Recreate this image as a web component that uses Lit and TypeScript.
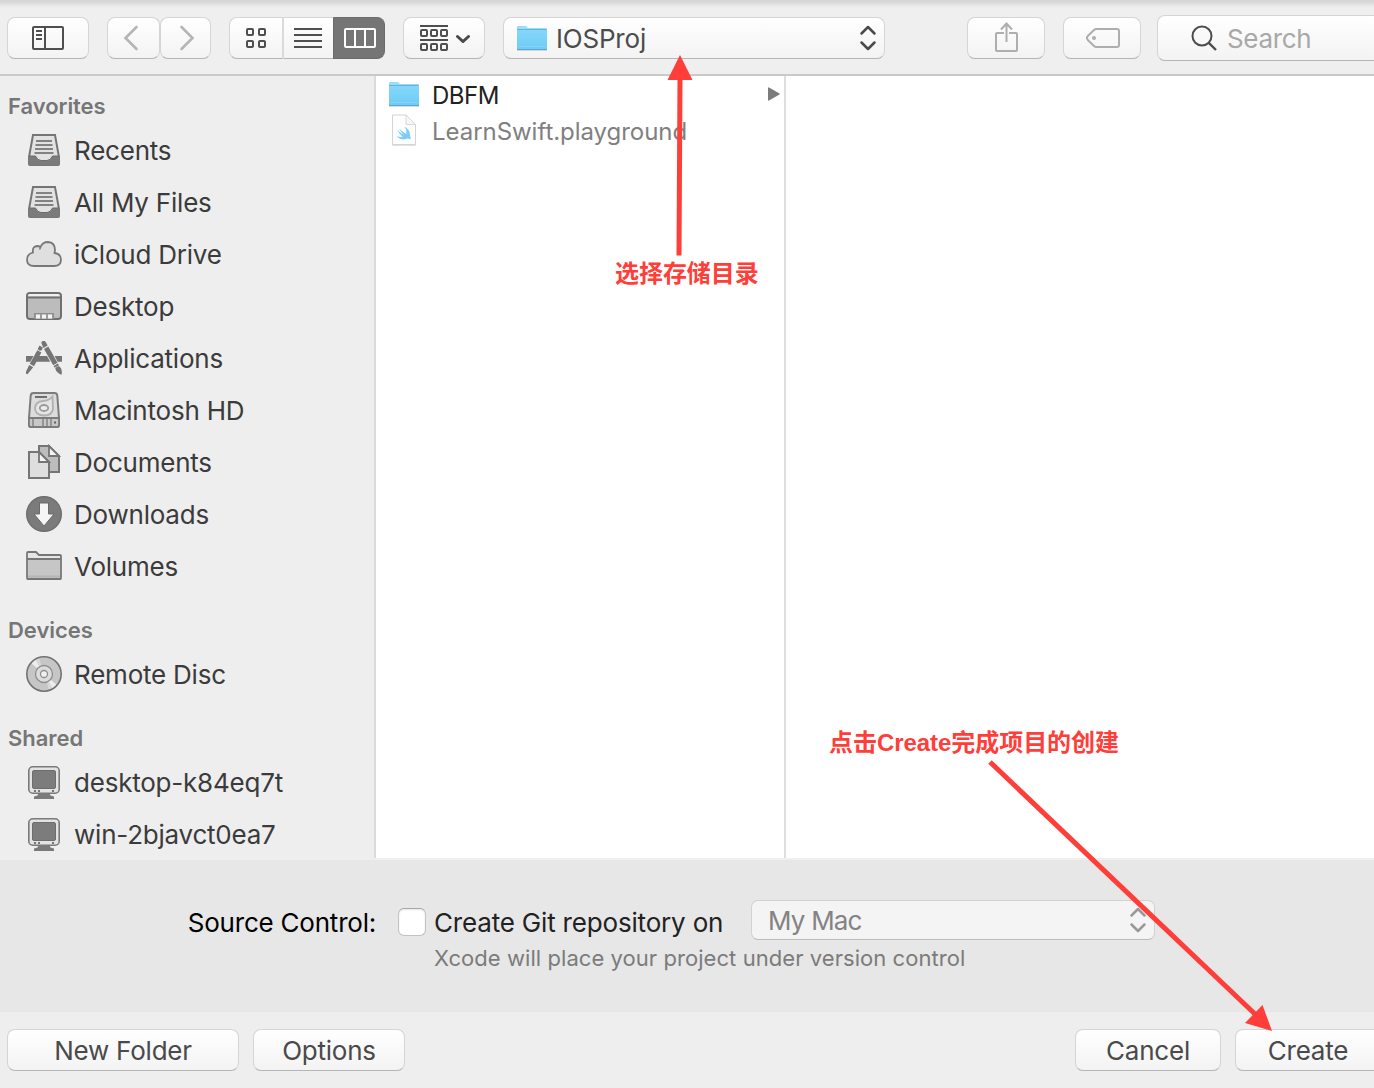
import { LitElement, html, svg, css, nothing, TemplateResult } from "lit";
import { customElement, property } from "lit/decorators.js";

type IconName =
  | "tray" | "cloud" | "desktop" | "apps" | "drive" | "docs"
  | "download" | "folder" | "disc" | "monitor";

const sidebarIcons: Record<IconName, TemplateResult> = {
  tray: svg`
    <path d="M7 3H29L33 25V32Q33 33 32 33H4Q3 33 3 32V25Z" fill="#e2e2e2" stroke="#757575" stroke-width="2"/>
    <path d="M2.500 24H9.500Q11.500 28.500 15 28.500H21Q24.500 28.500 26.500 24H33.500V31L32 33.500H4L2.500 31Z" fill="#7b7b7b"/>
    <path d="M3 24H9.500Q11.500 28.500 15 28.500H21Q24.500 28.500 26.500 24H33" fill="none" stroke="#6c6c6c" stroke-width="1"/>
    <path d="M10 9H26M9.500 13H26.500M9 17H27M8.500 21H27.500" stroke="#828282" stroke-width="2"/>`,
  cloud: svg`
    <path d="M8 30Q1 30 1 23.500Q1 18 7 16.500Q6 10.500 11 10Q13 10 14.500 11Q16.500 6 22 6Q29 6.500 29 14L28.500 17Q35 18 35 23.500Q35 30 28 30Z" fill="#dfdfdf" stroke="#787878" stroke-width="1.800"/>
    <path d="M14.500 11Q13.800 12.500 14 13.500" fill="none" stroke="#787878" stroke-width="1.600"/>`,
  desktop: svg`
    <rect x="1" y="5" width="34" height="26" rx="3" fill="#bcbcbc" stroke="#707070" stroke-width="2"/>
    <path d="M2 8.500V7.500Q2 6 4 6H32Q34 6 34 8.500Z" fill="#f0f0f0"/>
    <path d="M1 9.500H35" stroke="#707070" stroke-width="2"/>
    <path d="M8.500 31V25.500H27.500V31" fill="#9a9a9a" stroke="#8c8c8c"/>
    <path d="M10 26.500h4v4h-4zM16 26.500h4v4h-4zM22 26.500h4v4h-4z" fill="#f4f4f4"/>`,
  apps: svg`
    <path d="M0 16H7.500L4.300 21.700H0ZM12.800 16H21L24.200 21.700H9.500ZM28.600 16H36V21.700H31.600Z" fill="#757575"/>
    <path d="M13.500 5.500L16.800 7.400L15.800 10.300L13.800 10.700L11.600 9.200Z" fill="#757575"/>
    <path d="M11.300 10.300L15.400 12.600L8 26.200L3.800 23.800Z" fill="#757575"/>
    <path d="M3.200 24.900L7.200 27.200L1.500 34.300L0 33.800V31.500Z" fill="#757575"/>
    <path d="M15.200 2.800L16.500 1H18.800L20 2.600L21.700 5.600L17.400 8Z" fill="#757575"/>
    <path d="M18 9L22.300 6.600L31.500 22.800L27.200 25.200Z" fill="#757575"/>
    <path d="M27.700 26L32 23.600L33 25.300L28.700 27.700Z" fill="#757575"/>
    <path d="M29.200 28.600Q31 25.800 33.600 26.400Q36.800 29.500 35.500 34.800Q30.500 33.200 29.200 28.600Z" fill="#757575"/>`,
  drive: svg`
    <path d="M7.500 1H28.500Q31 1 31.300 3.500L33 26V33Q33 35 31 35H5Q3 35 3 33V26L4.700 3.500Q5 1 7.500 1Z" fill="#dcdcdc" stroke="#7c7c7c" stroke-width="2"/>
    <path d="M3 26H33V33Q33 35 31 35H5Q3 35 3 33Z" fill="#c8c8c8" stroke="#7c7c7c" stroke-width="1.800"/>
    <path d="M9 5H21" stroke="#6e6e6e" stroke-width="2"/>
    <path d="M26.500 4.500L27 17Q26 23.500 18 23.500Q9 23 9 16Q9.500 9.500 17 9Q23 8.800 26.500 4.500Z" fill="#e4e4e4" stroke="#b0b0b0" stroke-width="1.800"/>
    <ellipse cx="18" cy="16" rx="4.200" ry="3" fill="#ececec" stroke="#9a9a9a" stroke-width="1.800"/>
    <path d="M7 27V34M17 27V34M21 27V34M25 27V34" stroke="#909090" stroke-width="1.800"/>
    <path d="M28 30.500H30" stroke="#606060" stroke-width="2"/>`,
  docs: svg`
    <path d="M13 2H23L33 12V28H13Z" fill="#bdbdbd" stroke="#757575" stroke-width="2"/>
    <path d="M23 2V12H33Z" fill="#f4f4f4" stroke="#757575" stroke-width="1.800"/>
    <path d="M3 8H13L23 18V34H3Z" fill="#dedede" stroke="#757575" stroke-width="2"/>
    <path d="M13 8V18H23Z" fill="#f4f4f4" stroke="#757575" stroke-width="1.800"/>`,
  download: svg`
    <circle cx="18" cy="18" r="17.300" fill="#7b7b7b" stroke="#6d6d6d" stroke-width="1.400"/>
    <path d="M13.500 7H22.500V18H28L18 30L8 18H13.500Z" fill="#f6f6f6" stroke="#6a6a6a" stroke-width="1"/>`,
  folder: svg`
    <path d="M1 30V5Q1 4 2 4H10L13 7H34Q35 7 35 8V30Q35 31 34 31H2Q1 31 1 30Z" fill="#e6e6e6" stroke="#777" stroke-width="1.800"/>
    <path d="M2 12H34V30H2Z" fill="#c6c6c6"/>
    <path d="M1 11H35" stroke="#777" stroke-width="1.800"/>
    <path d="M2 28.500H34" stroke="#b4b4b4" stroke-width="2"/>
    <path d="M1 31H35" stroke="#777" stroke-width="1.800"/>`,
  disc: svg`
    <circle cx="18" cy="18" r="17" fill="#c6c6c6"/>
    <path d="M18 18L5 7L9.500 3.500ZM18 18L31 29L26.500 32.500Z" fill="#ededed"/>
    <path d="M18 18L9.500 3.500L13 2ZM18 18L26.500 32.500L23 34Z" fill="#d8d8d8"/>
    <circle cx="18" cy="18" r="17.200" fill="none" stroke="#727272" stroke-width="1.600"/>
    <circle cx="18" cy="18" r="8.500" fill="#dcdcdc" stroke="#8f8f8f" stroke-width="1.300"/>
    <circle cx="18" cy="18" r="3.500" fill="#f0f0f0" stroke="#8f8f8f" stroke-width="1.300"/>`,
  monitor: svg`
    <path d="M12.500 29H23.500L24.500 31.500L28 32.500V35H8V32.500L11.500 31.500Z" fill="#7a7a7a"/>
    <rect x="2.800" y="2.800" width="30.400" height="26.400" rx="4" fill="#e3e3e3" stroke="#7a7a7a" stroke-width="1.600"/>
    <rect x="6.500" y="6.500" width="23" height="18" rx="1.500" fill="#7c7c7c" stroke="#6d6d6d" stroke-width="1"/>
    <path d="M8 27h2M12 27h2M26 27h2" stroke="#757575" stroke-width="2"/>`,
};

const blueFolder = html`
  <svg class="blue-folder" width="32" height="28" viewBox="0 0 32 28">
    <defs>
      <linearGradient id="front" x1="0" y1="0" x2="0" y2="1">
        <stop offset="0" stop-color="#86d6f9"/><stop offset="1" stop-color="#6bcbf6"/>
      </linearGradient>
    </defs>
    <path d="M1 25V3Q1 2 2 2H10L12 4H30Q31 4 31 5V25Z" fill="#9bdcf8"/>
    <path d="M1 7V5H30.500V7Z" fill="#62b4dc"/>
    <path d="M1 6H31V25Q31 26 30 26H2Q1 26 1 25Z" fill="url(#front)"/>
    <path d="M1 25.500H31" stroke="#57a9d3" stroke-width="1"/>
    <path d="M2 22.500H30" stroke="#8ad6f8" stroke-width=".8"/>
    <path d="M1 26.500H31" stroke="#00000022" stroke-width="1"/>
  </svg>`;

const playgroundFile = html`
  <svg class="file-icon" width="32" height="34" viewBox="0 0 32 34">
    <path d="M4.500 1H18L27.500 10.500V30.500H4.500Z" fill="#fefefe" stroke="#d4d4d4"/>
    <path d="M18 1V10.500H27.500Z" fill="#f7f7f7" stroke="#d9d9d9"/>
    <path d="M4 31.500H28" stroke="#0000001c"/>
    <path transform="translate(0 -2.500)" d="M9 18Q13 22 16 23.500Q12.500 20 11 17Q15 21 18.500 22.500Q19 18.500 16.500 15Q22.500 18.500 22 24.500Q23.500 27 22.500 28Q20 26.500 18 27.500Q12.500 29 8.500 24.500Q12 26 14.500 25.300Q11 22 9 18Z" fill="#79cdf7"/>
  </svg>`;

@customElement("side-item")
export class SideItem extends LitElement {
  @property() icon: IconName = "folder";
  @property() label = "";

  static styles = css`
    :host { display: flex; align-items: center; height: 52px; padding-left: 26px; }
    .icon { flex: none; width: 36px; height: 36px; margin-bottom: 2px; }
    .label { margin-left: 12px; white-space: nowrap; }
  `;

  render() {
    return html`
      <svg class="icon" viewBox="0 0 36 36">${sidebarIcons[this.icon]}</svg>
      <span class="label">${this.label}</span>`;
  }
}

const sections: { title: string; items: [IconName, string][] }[] = [
  {
    title: "Favorites",
    items: [
      ["tray", "Recents"], ["tray", "All My Files"], ["cloud", "iCloud Drive"],
      ["desktop", "Desktop"], ["apps", "Applications"], ["drive", "Macintosh HD"],
      ["docs", "Documents"], ["download", "Downloads"], ["folder", "Volumes"],
    ],
  },
  { title: "Devices", items: [["disc", "Remote Disc"]] },
  { title: "Shared", items: [["monitor", "desktop-k84eq7t"], ["monitor", "win-2bjavct0ea7"]] },
];

const files = [
  { name: "DBFM", icon: blueFolder, folder: true },
  { name: "LearnSwift.playground", icon: playgroundFile, folder: false },
];

@customElement("app-root")
export class AppRoot extends LitElement {
  static styles = css`
    :host {
      display: block; position: relative; width: 1374px; height: 1088px; overflow: hidden;
      background: #efefef; color: #3b3b3b;
      font: 430 26px/1 Inter, "Liberation Sans", sans-serif;
      letter-spacing: -0.22px;
    }
    * { box-sizing: border-box; }
    svg { display: block; flex: none; }
    .dialog { display: flex; flex-direction: column; height: 1088px; }

    .toolbar {
      display: flex; align-items: center; height: 76px; padding: 2px 0 0 7px;
      border-bottom: 2px solid #c9c9c9; flex: none;
      background: linear-gradient(#d5d5d5 0, #dadada 3px, #e6e6e6 5px, #efefef 8px);
    }
    .btn {
      display: flex; align-items: center; justify-content: center; flex: none; height: 42px;
      border: 1px solid #d5d5d5; border-bottom-color: #b5b5b5; border-radius: 8px;
      background: linear-gradient(#ffffff, #f3f3f3); white-space: nowrap;
    }
    .w82 { width: 82px; }
    .w78 { width: 78px; }
    .nav { display: flex; margin-left: 18px; }
    .back { width: 53px; padding-right: 5px; }
    .fwd { width: 51px; padding-left: 2px; }
    .views { display: flex; margin-left: 18px; }
    .view-grid { width: 55px; padding-right: 1px; border-radius: 8px 0 0 8px; border-right: 2px solid #dadada; }
    .view-list { width: 49px; padding-right: 1px; border-radius: 0; border-left: 0; border-right: 0; }
    .view-columns { width: 52px; padding-left: 2px; border-radius: 0 8px 8px 0; background: #757575; border-color: #6a6a6a; border-top-color: #6d6d6d; }
    .arrange { margin-left: 18px; gap: 7px; padding-left: 2px; }
    .location { width: 382px; margin-left: 18px; justify-content: flex-start; padding: 0 7px 0 12px; color: #4c4c4c; }
    .location-name { flex: 1; margin-left: 8px; padding-top: 2px; letter-spacing: -0.2px; }
    .share { margin-left: 82px; padding-left: 2px; }
    .tag { margin-left: 18px; padding-left: 2px; }
    .search {
      width: 240px; height: 46px; margin-left: 16px; justify-content: flex-start;
      padding-left: 33px; gap: 10px; color: #a8a8a8; letter-spacing: -0.32px;
    }
    .search-text { padding-top: 2px; }

    .browser { display: flex; height: 784px; flex: none; }
    .sidebar { width: 376px; padding-top: 11px; border-right: 2px solid #dadada; flex: none; height: 782px; background: #eeeeee; }
    .heading {
      display: flex; align-items: center; height: 38px; padding-left: 8px;
      font-size: 22px; font-weight: 600; color: #767676; letter-spacing: -0.05px;
    }
    .section + .section { margin-top: 18px; }
    .column { height: 782px; background: #fff; }
    .files { width: 410px; padding-top: 1px; border-right: 2px solid #dedede; flex: none; }
    .preview { flex: 1; }
    .file { display: flex; align-items: center; height: 36px; padding: 0 4px 0 12px; font-size: 24px; color: #222; letter-spacing: -0.5px; }
    .file.dim { color: #808080; letter-spacing: -0.04px; }
    .file-name { flex: 1; margin-left: 12px; padding-top: 2px; white-space: nowrap; }
    .blue-folder { margin-bottom: 2px; }
    .location .blue-folder { margin-bottom: 0; }
    .disclosure { margin-bottom: 2px; }

    .accessory { height: 152px; padding-top: 40px; background: #e7e7e7; flex: none; }
    .scm { display: flex; align-items: center; height: 40px; white-space: nowrap; color: #222; }
    .scm-label { width: 376px; padding-top: 5px; text-align: right; color: #000; }
    .checkbox {
      width: 28px; height: 28px; margin: 4px 0 0 22px; border: 1px solid #c2c2c2; border-top-color: #a6a6a6;
      border-radius: 6px; background: #fff; box-shadow: inset 0 1px 2px #0000001a; flex: none;
    }
    .scm-text { width: 317px; padding-top: 5px; margin-left: 8px; letter-spacing: -0.18px; }
    .popup {
      display: flex; align-items: center; justify-content: space-between; width: 404px; height: 40px;
      padding: 1px 7px 0 16px; border: 1px solid #d2d2d2; border-bottom-color: #bcbcbc; border-radius: 7px;
      background: #f4f4f4; color: #838383; letter-spacing: -0.8px;
    }
    .popup svg { margin-bottom: 2px; }
    .hint { margin: 7px 0 0 434px; font-size: 22px; line-height: 22px; color: #7b7b7b; letter-spacing: 0.06px; white-space: nowrap; }

    .footer { display: flex; align-items: flex-start; height: 76px; padding: 17px 0 0 7px; background: #eeeeee; color: #4a4a4a; }
    .footer .btn { padding-top: 1px; }
    .new-folder { width: 232px; }
    .options { width: 152px; margin-left: 14px; }
    .cancel { width: 146px; margin-left: 670px; }
    .create { width: 146px; margin-left: 14px; }

    .marks { position: absolute; left: 0; top: 0; pointer-events: none; }
    .note {
      position: absolute; color: #ff3e39; white-space: nowrap; letter-spacing: -0.05px;
      font: 700 24px/28px "Liberation Sans", "Noto Sans CJK SC", sans-serif;
    }
    .note-dir { left: 615px; top: 260px; }
    .note-create { left: 829px; top: 729px; }
  `;

  private steppers(color: string) {
    return html`<svg width="18" height="28" viewBox="0 0 18 28" fill="none" stroke=${color}
      stroke-width="2.500" stroke-linecap="round" stroke-linejoin="round">
      <path d="M2.500 9.500L9 3L15.500 9.500M2.500 18.500L9 25L15.500 18.500"/></svg>`;
  }

  private toolbar() {
    return html`
      <div class="toolbar">
        <div class="btn w82">
          <svg width="32" height="24" viewBox="0 0 32 24" fill="none" stroke="#4f4f4f" stroke-width="2">
            <rect x="1" y="1" width="30" height="22" rx="1"/><path d="M13 1V23M4 5H10M4 9H10M4 13H10"/>
          </svg>
        </div>
        <div class="nav">
          <div class="btn back"><svg width="16" height="26" viewBox="0 0 16 26" fill="none" stroke="#b5b5b5" stroke-width="2.600" stroke-linecap="round"><path d="M13.500 2L2.500 13L13.500 24"/></svg></div>
          <div class="btn fwd"><svg width="16" height="26" viewBox="0 0 16 26" fill="none" stroke="#b5b5b5" stroke-width="2.600" stroke-linecap="round"><path d="M2.500 2L13.500 13L2.500 24"/></svg></div>
        </div>
        <div class="views">
          <div class="btn view-grid">
            <svg width="20" height="20" viewBox="0 0 20 20" fill="none" stroke="#4f4f4f" stroke-width="2">
              <rect x="1" y="1" width="6" height="6" rx="1"/><rect x="13" y="1" width="6" height="6" rx="1"/>
              <rect x="1" y="13" width="6" height="6" rx="1"/><rect x="13" y="13" width="6" height="6" rx="1"/>
            </svg>
          </div>
          <div class="btn view-list">
            <svg width="28" height="20" viewBox="0 0 28 20" stroke="#4f4f4f" stroke-width="2"><path d="M0 1H28M0 7H28M0 13H28M0 19H28"/></svg>
          </div>
          <div class="btn view-columns">
            <svg width="32" height="20" viewBox="0 0 32 20" fill="none" stroke="#fff" stroke-width="2"><rect x="1" y="1" width="30" height="18" rx="1"/><path d="M11 1V19M21 1V19"/></svg>
          </div>
        </div>
        <div class="btn w82 arrange">
          <svg width="28" height="26" viewBox="0 0 28 26" fill="none" stroke="#4f4f4f" stroke-width="2">
            <path d="M0 1H28M0 15H28"/>
            <rect x="1" y="5" width="6" height="6" rx="1"/><rect x="11" y="5" width="6" height="6" rx="1"/><rect x="21" y="5" width="6" height="6" rx="1"/>
            <rect x="1" y="19" width="6" height="6" rx="1"/><rect x="11" y="19" width="6" height="6" rx="1"/><rect x="21" y="19" width="6" height="6" rx="1"/>
          </svg>
          <svg width="16" height="10" viewBox="0 0 16 10" fill="none" stroke="#4a4a4a" stroke-width="3" stroke-linecap="round"><path d="M2.500 3.500L8 8.500L13.500 3.500"/></svg>
        </div>
        <div class="btn location">
          ${blueFolder}<span class="location-name">IOSProj</span>${this.steppers("#4a4a4a")}
        </div>
        <div class="btn w78 share">
          <svg width="24" height="32" viewBox="0 0 24 32" fill="none" stroke="#aeaeae" stroke-width="2">
            <path d="M9 11H2Q1 11 1 12V28Q1 29 2 29H21Q22 29 22 28V12Q22 11 21 11H14M11.500 20V2M6 7.500L11.500 1.500L17 7.500"/>
          </svg>
        </div>
        <div class="btn w78 tag">
          <svg width="34" height="20" viewBox="0 0 34 20" fill="none" stroke="#aeaeae" stroke-width="2">
            <path d="M10.500 1H31Q33 1 33 3V17Q33 19 31 19H10.500Q9 19 8 18L1.800 12Q0.200 10 1.800 8L8 2Q9 1 10.500 1Z"/><circle cx="8" cy="10" r="2" fill="#aeaeae" stroke="none"/>
          </svg>
        </div>
        <div class="btn search">
          <svg width="26" height="26" viewBox="0 0 26 26" fill="none" stroke="#4c4c4c" stroke-width="2"><circle cx="11" cy="11" r="9.500"/><path d="M17.800 17.800L25 25" stroke-width="2.400"/></svg>
          <span class="search-text">Search</span>
        </div>
      </div>`;
  }

  render() {
    return html`
      <div class="dialog">
        ${this.toolbar()}
        <div class="browser">
          <div class="sidebar">
            ${sections.map((s) => html`
              <div class="section">
                <div class="heading">${s.title}</div>
                ${s.items.map(([icon, label]) => html`<side-item .icon=${icon} .label=${label}></side-item>`)}
              </div>`)}
          </div>
          <div class="column files">
            ${files.map((f) => html`
              <div class="file ${f.folder ? "" : "dim"}">
                ${f.icon}<span class="file-name">${f.name}</span>
                ${f.folder
                  ? html`<svg class="disclosure" width="12" height="14" viewBox="0 0 12 14"><path d="M0 1Q0 0 1 .4L11.500 6.500Q12 7 11.500 7.500L1 13.600Q0 14 0 13Z" fill="#7c7c7c"/></svg>`
                  : nothing}
              </div>`)}
          </div>
          <div class="column preview"></div>
        </div>
        <div class="accessory">
          <div class="scm">
            <span class="scm-label">Source Control:</span>
            <span class="checkbox"></span>
            <span class="scm-text">Create Git repository on</span>
            <div class="popup"><span>My Mac</span>${this.steppers("#999999")}</div>
          </div>
          <div class="hint">Xcode will place your project under version control</div>
        </div>
        <div class="footer">
          <div class="btn new-folder">New Folder</div>
          <div class="btn options">Options</div>
          <div class="btn cancel">Cancel</div>
          <div class="btn create">Create</div>
        </div>
      </div>
      <svg class="marks" width="1374" height="1088" viewBox="0 0 1374 1088" fill="#ff3e39" stroke="#ff3e39">
        <path d="M680 78L679 255.500M990 762L1256 1015" stroke-width="5"/>
        <path d="M680 55L692.500 80H667.500ZM1272 1031L1262.500 1005L1245 1023Z" stroke="none"/>
      </svg>
      <div class="note note-dir">选择存储目录</div>
      <div class="note note-create">点击Create完成项目的创建</div>`;
  }
}
